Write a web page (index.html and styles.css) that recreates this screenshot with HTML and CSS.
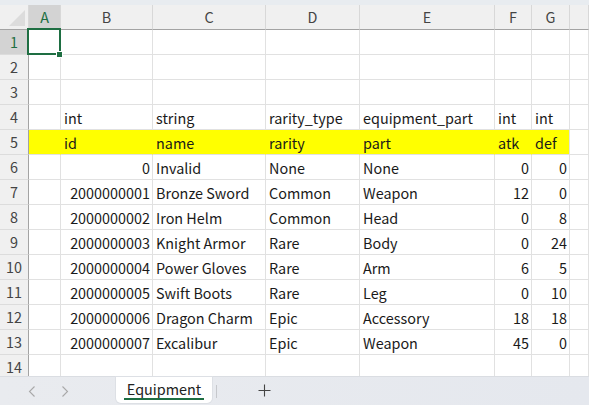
FILE: index.html
```html
<!DOCTYPE html>
<html lang="en">
<head>
<meta charset="utf-8">
<title>Equipment</title>
<link rel="stylesheet" href="styles.css">
</head>
<body>
<div class="topstrip"></div>
<div class="sheet">
  <div class="row head">
    <div class="c corner"></div>
    <div class="c sel-h">A</div>
    <div class="c">B</div>
    <div class="c">C</div>
    <div class="c">D</div>
    <div class="c">E</div>
    <div class="c">F</div>
    <div class="c">G</div>
    <div class="c"></div>
  </div>
  <div class="row">
    <div class="c rh sel-h">1</div>
    <div class="c a1"><div class="selection"></div><div class="handle"></div></div>
    <div class="c"></div><div class="c"></div><div class="c"></div><div class="c"></div><div class="c"></div><div class="c"></div><div class="c"></div>
  </div>
  <div class="row">
    <div class="c rh">2</div>
    <div class="c"></div><div class="c"></div><div class="c"></div><div class="c"></div><div class="c"></div><div class="c"></div><div class="c"></div><div class="c"></div>
  </div>
  <div class="row">
    <div class="c rh">3</div>
    <div class="c"></div><div class="c"></div><div class="c"></div><div class="c"></div><div class="c"></div><div class="c"></div><div class="c"></div><div class="c"></div>
  </div>
  <div class="row">
    <div class="c rh">4</div>
    <div class="c"></div>
    <div class="c">int</div>
    <div class="c">string</div>
    <div class="c">rarity_type</div>
    <div class="c">equipment_part</div>
    <div class="c">int</div>
    <div class="c">int</div>
    <div class="c"></div>
  </div>
  <div class="row keys">
    <div class="c rh">5</div>
    <div class="c fill"></div>
    <div class="c fill">id</div>
    <div class="c fill">name</div>
    <div class="c fill">rarity</div>
    <div class="c fill">part</div>
    <div class="c fill">atk</div>
    <div class="c fill last">def</div>
    <div class="c"></div>
  </div>
  <div class="row">
    <div class="c rh">6</div>
    <div class="c"></div>
    <div class="c num">0</div>
    <div class="c">Invalid</div>
    <div class="c">None</div>
    <div class="c">None</div>
    <div class="c num">0</div>
    <div class="c num">0</div>
    <div class="c"></div>
  </div>
  <div class="row">
    <div class="c rh">7</div>
    <div class="c"></div>
    <div class="c num">2000000001</div>
    <div class="c">Bronze Sword</div>
    <div class="c">Common</div>
    <div class="c">Weapon</div>
    <div class="c num">12</div>
    <div class="c num">0</div>
    <div class="c"></div>
  </div>
  <div class="row">
    <div class="c rh">8</div>
    <div class="c"></div>
    <div class="c num">2000000002</div>
    <div class="c">Iron Helm</div>
    <div class="c">Common</div>
    <div class="c">Head</div>
    <div class="c num">0</div>
    <div class="c num">8</div>
    <div class="c"></div>
  </div>
  <div class="row">
    <div class="c rh">9</div>
    <div class="c"></div>
    <div class="c num">2000000003</div>
    <div class="c">Knight Armor</div>
    <div class="c">Rare</div>
    <div class="c">Body</div>
    <div class="c num">0</div>
    <div class="c num">24</div>
    <div class="c"></div>
  </div>
  <div class="row">
    <div class="c rh">10</div>
    <div class="c"></div>
    <div class="c num">2000000004</div>
    <div class="c">Power Gloves</div>
    <div class="c">Rare</div>
    <div class="c">Arm</div>
    <div class="c num">6</div>
    <div class="c num">5</div>
    <div class="c"></div>
  </div>
  <div class="row">
    <div class="c rh">11</div>
    <div class="c"></div>
    <div class="c num">2000000005</div>
    <div class="c">Swift Boots</div>
    <div class="c">Rare</div>
    <div class="c">Leg</div>
    <div class="c num">0</div>
    <div class="c num">10</div>
    <div class="c"></div>
  </div>
  <div class="row">
    <div class="c rh">12</div>
    <div class="c"></div>
    <div class="c num">2000000006</div>
    <div class="c">Dragon Charm</div>
    <div class="c">Epic</div>
    <div class="c">Accessory</div>
    <div class="c num">18</div>
    <div class="c num">18</div>
    <div class="c"></div>
  </div>
  <div class="row">
    <div class="c rh">13</div>
    <div class="c"></div>
    <div class="c num">2000000007</div>
    <div class="c">Excalibur</div>
    <div class="c">Epic</div>
    <div class="c">Weapon</div>
    <div class="c num">45</div>
    <div class="c num">0</div>
    <div class="c"></div>
  </div>
  <div class="row">
    <div class="c rh">14</div>
    <div class="c"></div><div class="c"></div><div class="c"></div><div class="c"></div><div class="c"></div><div class="c"></div><div class="c"></div><div class="c"></div>
  </div>
</div>
<div class="tabbar">
  <div class="nav">
    <svg class="arrow" width="8" height="11" viewBox="0 0 8 11"><path d="M6.5 0.5 L1.5 5.5 L6.5 10.5" fill="none" stroke="#a8a8a8" stroke-width="1.1"/></svg>
    <svg class="arrow" width="8" height="11" viewBox="0 0 8 11"><path d="M1.5 0.5 L6.5 5.5 L1.5 10.5" fill="none" stroke="#a8a8a8" stroke-width="1.1"/></svg>
  </div>
  <div class="tab"><span class="tab-label">Equipment</span></div>
  <div class="divider"></div>
  <div class="add">
    <svg width="13" height="13" viewBox="0 0 13 13"><path d="M6.5 0.5 V12.5 M0.5 6.5 H12.5" fill="none" stroke="#444" stroke-width="1.1"/></svg>
  </div>
</div>
</body>
</html>
```

FILE: styles.css
```css
* { box-sizing: border-box; }

body {
  margin: 0;
  width: 589px;
  height: 405px;
  overflow: hidden;
  display: flex;
  flex-direction: column;
  background: #fff;
  color: #1a1a1a;
  font-family: "Noto Sans CJK JP", "Noto Sans", sans-serif;
  font-size: 14.4px;
}

.topstrip {
  flex: none;
  height: 5px;
  background: #e8ecf0;
}

.sheet {
  flex: 1;
  overflow: hidden;
}

.row {
  display: grid;
  grid-template-columns: 29px 32px 92px 113px 94px 135px 37px 38px 1fr;
  height: 25px;
}

.c {
  display: flex;
  align-items: center;
  padding: 1px 2px 0 3px;
  line-height: 20px;
  white-space: nowrap;
  overflow: hidden;
  border-right: 1px solid #e1e1e1;
  border-bottom: 1px solid #e1e1e1;
}

.num { justify-content: flex-end; padding-right: 2px; }

/* column letters */
.head .c {
  background: #f0f0f0;
  color: #444;
  justify-content: center;
  border-right-color: #d8d8d8;
  border-bottom-color: #a3a3a3;
  padding: 0;
}

/* row numbers */
.rh {
  background: #f0f0f0;
  color: #444;
  justify-content: center;
  border-right-color: #a3a3a3;
  border-bottom-color: #dcdcdc;
  padding: 0;
}

.head .sel-h,
.rh.sel-h {
  background: #d3d3d3;
  color: #1e6e42;
}

.corner { position: relative; }
.corner::after {
  content: "";
  position: absolute;
  right: 3px;
  bottom: 3px;
  width: 16px;
  height: 16px;
  background: #dcdcdc;
  clip-path: polygon(100% 0, 100% 100%, 0 100%);
}

/* key row fill */
.fill {
  background: #ffff00;
  border-right-color: #ffff00;
}
.fill.last { border-right-color: #e1e1e1; }

/* active cell */
.a1 { position: relative; overflow: visible; }
.selection {
  position: absolute;
  left: -2px;
  top: -2px;
  width: 34px;
  height: 27px;
  border: 2px solid #1e6e42;
  z-index: 2;
}
.handle {
  position: absolute;
  left: 27px;
  top: 21px;
  width: 7px;
  height: 7px;
  background: #1e6e42;
  border: 1px solid #fff;
  z-index: 3;
}

/* sheet tabs */
.tabbar {
  flex: none;
  height: 29px;
  display: flex;
  align-items: stretch;
  background: linear-gradient(90deg, #e9ebef, #e5e8ee);
  border-top: 1px solid #dadde2;
}

.nav {
  width: 116px;
  display: flex;
  align-items: center;
  gap: 25px;
  padding-left: 28px;
}

.tab {
  width: 96px;
  margin-bottom: 2px;
  background: #fff;
  border-radius: 0 0 5px 5px;
  box-shadow: 0 0 0 1px #dde0e5;
  display: flex;
  justify-content: center;
  align-items: center;
  position: relative;
}
.tab-label {
  color: #222;
  line-height: 20px;
  margin-top: -2px;
}
.tab::after {
  content: "";
  position: absolute;
  left: 8px;
  right: 8px;
  bottom: 3px;
  height: 2px;
  background: #1e6e42;
}

.divider {
  width: 1px;
  margin: 8px 0 7px 4px;
  background: #c6c8cc;
}

.add {
  width: 94px;
  display: flex;
  justify-content: center;
  align-items: center;
  padding-bottom: 1px;
}
```
